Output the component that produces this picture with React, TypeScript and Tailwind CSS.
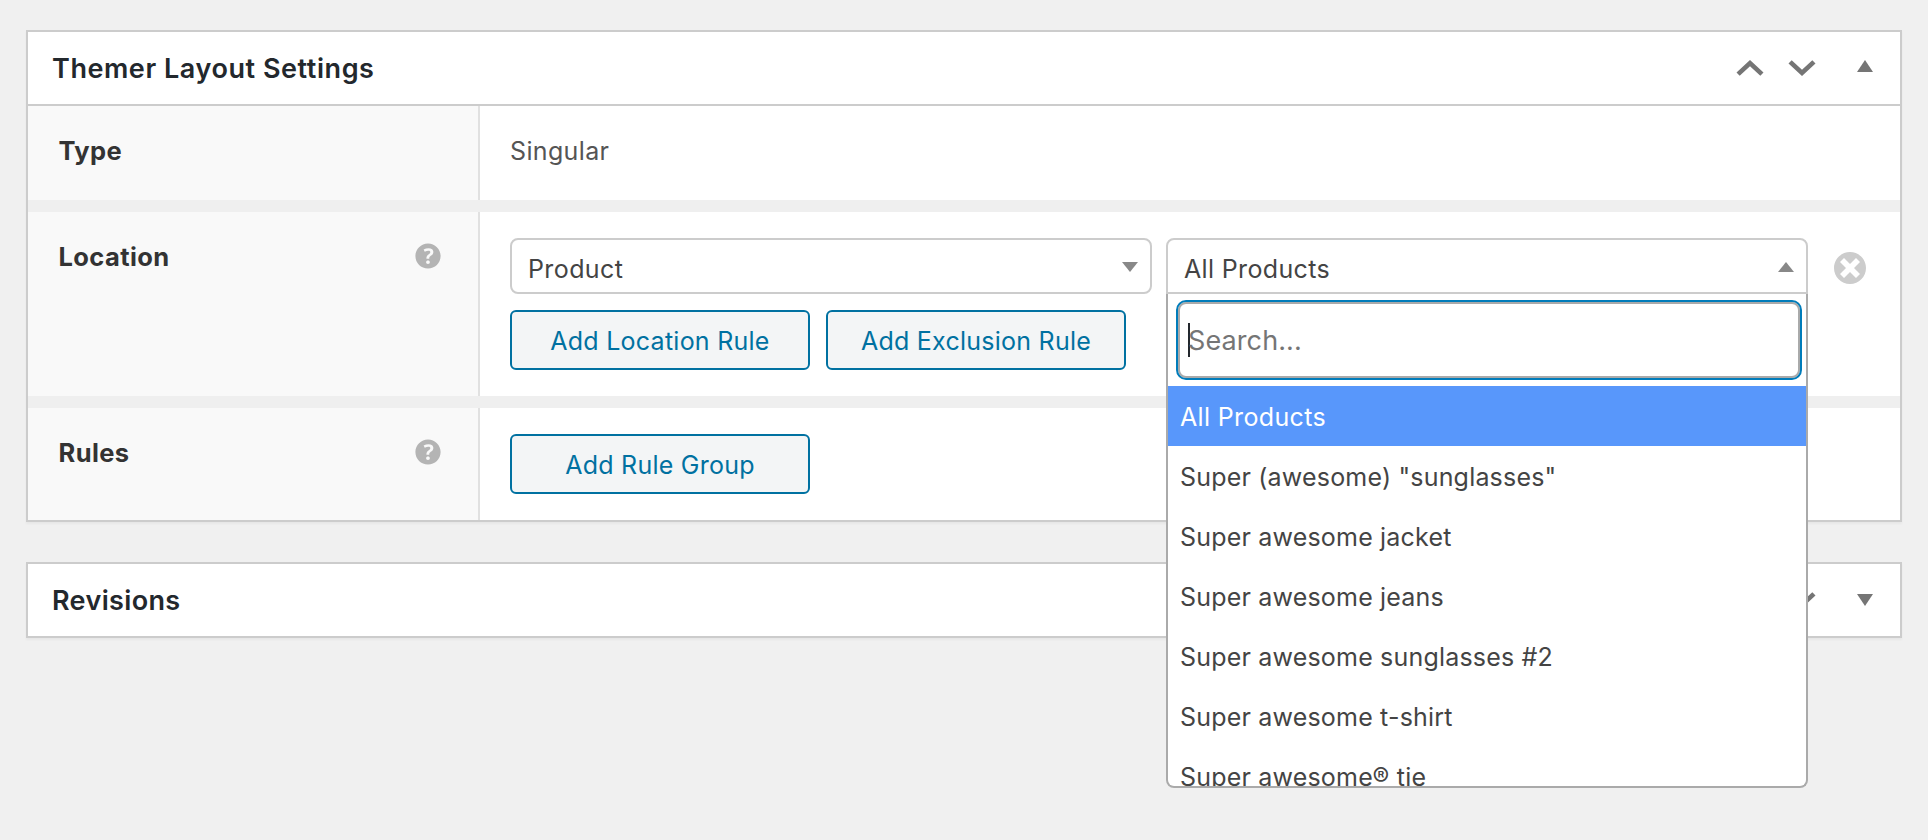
import type { ReactNode } from "react";

const options = [
  "All Products",
  'Super (awesome) "sunglasses"',
  "Super awesome jacket",
  "Super awesome jeans",
  "Super awesome sunglasses #2",
  "Super awesome t-shirt",
  "Super awesome® tie",
];

function ChevronUp() {
  return (
    <svg className="h-4 w-7" viewBox="0 0 28 16" fill="#757575">
      <path d="M14 0 27.5 12.6 24.3 15.8 14 6.3 3.7 15.8.5 12.6z" />
    </svg>
  );
}

function ChevronDown() {
  return (
    <svg className="h-4 w-7" viewBox="0 0 28 16" fill="#757575">
      <path d="M14 16 .5 3.4 3.7.2 14 9.7 24.3.2 27.5 3.4z" />
    </svg>
  );
}

function Triangle({ up, className }: { up?: boolean; className: string }) {
  return (
    <svg className={className} viewBox="0 0 16 12" preserveAspectRatio="none" fill="currentColor">
      <path d={up ? "M8 0 16 12H0z" : "M0 0H16L8 12z"} />
    </svg>
  );
}

function HelpIcon() {
  return (
    <svg className="-mt-0.5 size-9 shrink-0" viewBox="0 0 20 20" fill="#b4b4b4">
      <path d="M17 10c0-3.87-3.14-7-7-7-3.87 0-7 3.13-7 7s3.13 7 7 7c3.86 0 7-3.13 7-7zm-6.3 1.48H9.14v-.43c0-.38.08-.7.24-.98s.46-.57.88-.89c.41-.29.68-.53.81-.71.14-.18.2-.39.2-.62 0-.25-.09-.44-.28-.58-.19-.13-.45-.19-.79-.19-.58 0-1.25.19-2 .57l-.64-1.28c.87-.49 1.8-.74 2.77-.74.81 0 1.45.2 1.92.58.48.39.71.91.71 1.55 0 .43-.09.8-.29 1.11-.19.32-.57.67-1.11 1.06-.38.28-.61.49-.71.63-.1.15-.15.34-.15.57v.35zm-1.47 2.74c-.18-.17-.27-.42-.27-.73 0-.33.08-.58.26-.75s.43-.25.77-.25c.32 0 .57.09.75.26s.27.42.27.74c0 .3-.09.55-.27.72-.18.18-.43.27-.75.27-.33 0-.58-.09-.76-.26z" />
    </svg>
  );
}

function DismissIcon() {
  return (
    <svg className="size-10" viewBox="0 0 20 20" fill="#cccccc">
      <path d="M10 2c4.42 0 8 3.58 8 8s-3.58 8-8 8-8-3.58-8-8 3.58-8 8-8zm5 11l-3-3 3-3-2-2-3 3-3-3-2 2 3 3-3 3 2 2 3-3 3 3z" />
    </svg>
  );
}

function PanelHeader({ title, open }: { title: string; open?: boolean }) {
  return (
    <div className="flex h-[72px] items-center pr-[27px] pl-6">
      <h2
        className={`flex-1 pt-[3px] text-[27px] font-semibold text-[#23282d] ${open ? "tracking-[0.56px]" : "tracking-[0.35px]"}`}
      >
        {title}
      </h2>
      <div className="flex items-center text-[#757575]">
        <ChevronUp />
        <span className="w-6" />
        <ChevronDown />
        <Triangle up={open} className={open ? "-mt-1 ml-[41px] h-3 w-4" : "ml-[41px] h-3 w-4"} />
      </div>
    </div>
  );
}

function SettingRow({ label, help, className, children }: { label: string; help?: boolean; className: string; children: ReactNode }) {
  return (
    <div className={`flex ${className}`}>
      <div className="flex w-[452px] shrink-0 items-start justify-between border-r-2 border-[#e1e1e1] bg-[#f9f9f9] pt-7 pr-8 pl-[30.5px]">
        <span className="text-[25.5px] leading-[34px] font-bold tracking-[0.4px] text-[#333333]">{label}</span>
        {help && <HelpIcon />}
      </div>
      <div className="flex-1 pl-[30px]">{children}</div>
    </div>
  );
}

function RuleButton({ children }: { children: ReactNode }) {
  return (
    <button className="flex h-[60px] w-[300px] items-center justify-center rounded-md border-2 border-[#0071a1] bg-[#f3f5f6] pt-1 text-[25px] tracking-[0.25px] text-[#0071a1]">
      {children}
    </button>
  );
}

function ProductDropdown() {
  return (
    <div className="absolute top-14 left-0 z-10 flex h-[494px] w-[642px] flex-col overflow-hidden rounded-b-lg border-2 border-t-0 border-[#aaaaaa] bg-white">
      <div className="pt-1.5 pr-1 pb-1.5 pl-2">
        <div className="flex h-20 items-center rounded-[10px] border-2 border-[#007cba] shadow-[inset_0_0_0_2px_#aaaaaa]">
          <span className="ml-2.5 h-[34px] w-0.5 bg-[#23282d]" />
          <span className="-ml-0.5 pt-0.5 text-[27px] tracking-[0.1px] text-[#757575]">Search...</span>
        </div>
      </div>
      {options.map((option, i) => (
        <div
          key={option}
          className={`flex h-[60px] shrink-0 items-center pt-[3px] pl-3 text-[25px] ${i === 0 ? "bg-[#5897fb] tracking-[0.35px] text-white" : "tracking-[0.19px] text-[#444444]"}`}
        >
          {option}
        </div>
      ))}
    </div>
  );
}

export default function App() {
  return (
    <div className="h-[840px] w-[1928px] overflow-hidden bg-[#f0f0f0] px-[26px] pt-[30px] font-['Inter','Liberation_Sans',sans-serif]">
      <section className="border-2 border-[#cccccc] bg-white shadow-[0_2px_2px_rgba(0,0,0,0.04)]">
        <div className="border-b-2 border-[#cccccc]">
          <PanelHeader title="Themer Layout Settings" open />
        </div>
        <SettingRow label="Type" className="h-[94px]">
          <p className="pt-7 text-[25px] leading-[34px] tracking-[0.35px] text-[#555555]">Singular</p>
        </SettingRow>
        <div className="h-3 bg-[#efefef]" />
        <SettingRow label="Location" help className="h-[184px]">
          <div className="flex items-center gap-3.5 pt-[26px]">
            <div className="flex h-14 w-[642px] items-center justify-between rounded-lg border-2 border-[#cccccc] pr-3 pl-4">
              <span className="pt-[7px] text-[25px] tracking-[0.4px] text-[#444444]">Product</span>
              <Triangle className="mt-0.5 h-2.5 w-4 text-[#888888]" />
            </div>
            <div className="relative">
              <div className="flex h-14 w-[642px] items-center justify-between rounded-t-lg border-2 border-[#cccccc] pr-3 pl-4">
                <span className="pt-[7px] text-[25px] tracking-[0.35px] text-[#444444]">All Products</span>
                <Triangle up className="mt-0.5 h-2.5 w-4 text-[#888888]" />
              </div>
              <ProductDropdown />
            </div>
            <div className="ml-2 pt-1">
              <DismissIcon />
            </div>
          </div>
          <div className="flex gap-4 pt-4">
            <RuleButton>Add Location Rule</RuleButton>
            <RuleButton>Add Exclusion Rule</RuleButton>
          </div>
        </SettingRow>
        <div className="h-3 bg-[#efefef]" />
        <SettingRow label="Rules" help className="h-[112px]">
          <div className="pt-[26px]">
            <RuleButton>Add Rule Group</RuleButton>
          </div>
        </SettingRow>
      </section>
      <section className="mt-10 border-2 border-[#cccccc] bg-white shadow-[0_2px_2px_rgba(0,0,0,0.04)]">
        <PanelHeader title="Revisions" />
      </section>
    </div>
  );
}
